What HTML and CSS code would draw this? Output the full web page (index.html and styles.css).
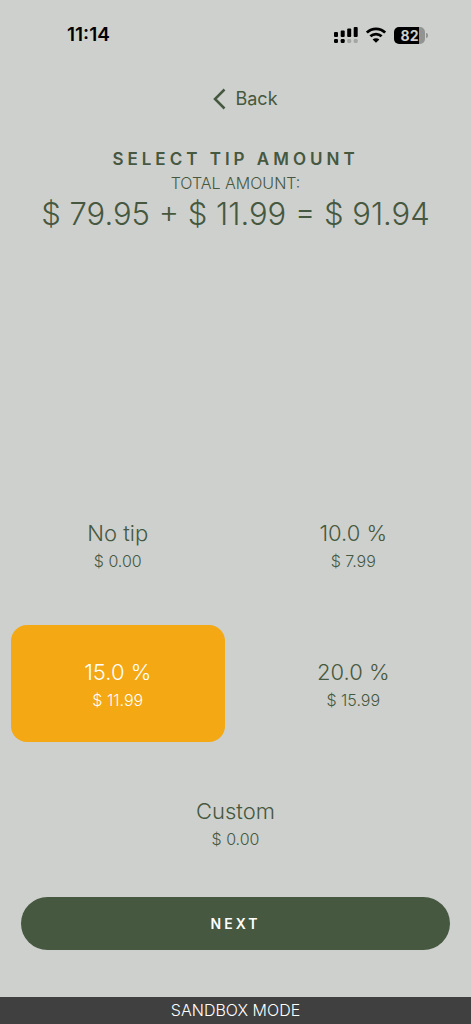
FILE: index.html
```html
<!DOCTYPE html>
<html lang="en">
<head>
<meta charset="utf-8">
<meta name="viewport" content="width=device-width, initial-scale=1">
<title>Select tip amount</title>
<link rel="stylesheet" href="styles.css">
</head>
<body>
<div class="screen">
  <div class="status">
    <time class="clock">11:14</time>
    <div class="indicators">
      <svg class="signal" width="24" height="18" viewBox="0 0 24 18" aria-hidden="true">
        <rect x="0" y="6" width="4" height="5" rx="1"/>
        <rect x="6.7" y="4.500" width="4" height="6.500" rx="1"/>
        <rect x="13.200" y="2.500" width="4" height="8.500" rx="1"/>
        <rect x="19.700" y="1" width="4" height="10" rx="1"/>
        <rect x="0" y="13" width="4" height="4" rx="1.200"/>
        <rect x="6.700" y="13" width="4" height="4" rx="1.200"/>
        <rect class="faint" x="13.200" y="13" width="4" height="4" rx="1.200"/>
        <rect class="faint" x="19.700" y="13" width="4" height="4" rx="1.200"/>
      </svg>
      <svg class="wifi" width="20" height="16" viewBox="0 0 20 16" aria-hidden="true">
        <path d="M.800 5.600C6 .6 14 .6 19.200 5.600M4.400 9.300c3.200-3 8-3 11.200 0" fill="none" stroke="#000" stroke-width="2.800"/>
        <path d="M10 15.800 6.600 12.400c1.900-1.700 4.900-1.700 6.800 0Z"/>
      </svg>
      <div class="battery"><span class="level">82</span></div>
    </div>
  </div>

  <header class="top">
    <button class="back" type="button">
      <svg width="13" height="22" viewBox="0 0 13 22" aria-hidden="true"><path d="M11.500 1.500 2 11l9.500 9.500" fill="none" stroke="currentColor" stroke-width="2.500"/></svg>
      <span>Back</span>
    </button>
    <h1 class="title">SELECT TIP AMOUNT</h1>
    <p class="caption">TOTAL AMOUNT:</p>
    <p class="total">$ 79.95 + $ 11.99 = $ 91.94</p>
  </header>

  <main class="tips">
    <button class="tip" type="button" aria-pressed="false"><span class="rate">No tip</span><span class="sum">$ 0.00</span></button>
    <button class="tip" type="button" aria-pressed="false"><span class="rate">10.0 %</span><span class="sum">$ 7.99</span></button>
    <button class="tip selected" type="button" aria-pressed="true"><span class="rate">15.0 %</span><span class="sum">$ 11.99</span></button>
    <button class="tip" type="button" aria-pressed="false"><span class="rate">20.0 %</span><span class="sum">$ 15.99</span></button>
    <button class="tip wide" type="button" aria-pressed="false"><span class="rate">Custom</span><span class="sum">$ 0.00</span></button>
  </main>

  <div class="actions"><button class="next" type="button">NEXT</button></div>
  <footer class="mode">SANDBOX MODE</footer>
</div>
</body>
</html>
```
FILE: styles.css
```css
* { box-sizing: border-box; }

body {
  margin: 0;
  background: #ced0cd;
  color: #465840;
  font-family: Inter, "Liberation Sans", sans-serif;
}

button {
  border: 0;
  padding: 0;
  background: none;
  color: inherit;
  font: inherit;
  cursor: pointer;
}

h1, p { margin: 0; }

.screen {
  display: flex;
  flex-direction: column;
  min-height: 100vh;
}

.status {
  display: flex;
  justify-content: space-between;
  align-items: center;
  padding: 24px 46px 0 67px;
  color: #000;
}

.clock {
  font-size: 19px;
  line-height: 22px;
  font-weight: 600;
}

.indicators {
  display: flex;
  align-items: center;
  gap: 8px;
}

.faint { opacity: 0.2; }

.battery {
  position: relative;
  width: 31px;
  height: 17px;
  border-radius: 5px;
  background: linear-gradient(90deg, #000 82%, #929492 82%);
}

.battery::after {
  content: "";
  position: absolute;
  left: 32px;
  top: 6px;
  width: 2px;
  height: 5px;
  border-radius: 0 2px 2px 0;
  background: #929492;
}

.level {
  display: block;
  color: #ced0cd;
  font-size: 14px;
  line-height: 17px;
  font-weight: 700;
  text-align: center;
}

.top {
  display: flex;
  flex-direction: column;
  align-items: center;
  padding-top: 41px;
}

.back {
  display: flex;
  align-items: center;
  gap: 9px;
  margin: 0 0 37px 20px;
  font-size: 18px;
  line-height: 24px;
}

.title {
  font-size: 17px;
  line-height: 22px;
  font-weight: 600;
  letter-spacing: 4px;
}

.caption {
  font-size: 16px;
  line-height: 26px;
  font-weight: 300;
}

.total {
  font-size: 31px;
  line-height: 36px;
  font-weight: 300;
}

.tips {
  display: grid;
  grid-template-columns: 1fr 1fr;
  gap: 22px;
  margin-top: auto;
  padding: 0 11px;
}

.tip {
  display: flex;
  flex-direction: column;
  align-items: center;
  justify-content: center;
  min-height: 117px;
  padding-top: 3px;
  border-radius: 16px;
}

.selected {
  background: #f3a814;
  color: #fff;
}

.wide { grid-column: 1 / -1; }

.rate {
  font-size: 22px;
  line-height: 30px;
  font-weight: 300;
}

.sum {
  font-size: 16px;
  line-height: 26px;
  font-weight: 300;
}

.actions {
  display: flex;
  padding: 16px 21px 47px;
}

.next {
  flex: 1;
  height: 53px;
  border-radius: 27px;
  background: #465840;
  color: #fff;
  font-size: 14px;
  font-weight: 600;
  letter-spacing: 3px;
}

.mode {
  background: #404040;
  color: #fff;
  font-size: 16px;
  line-height: 27px;
  font-weight: 300;
  text-align: center;
}
```
